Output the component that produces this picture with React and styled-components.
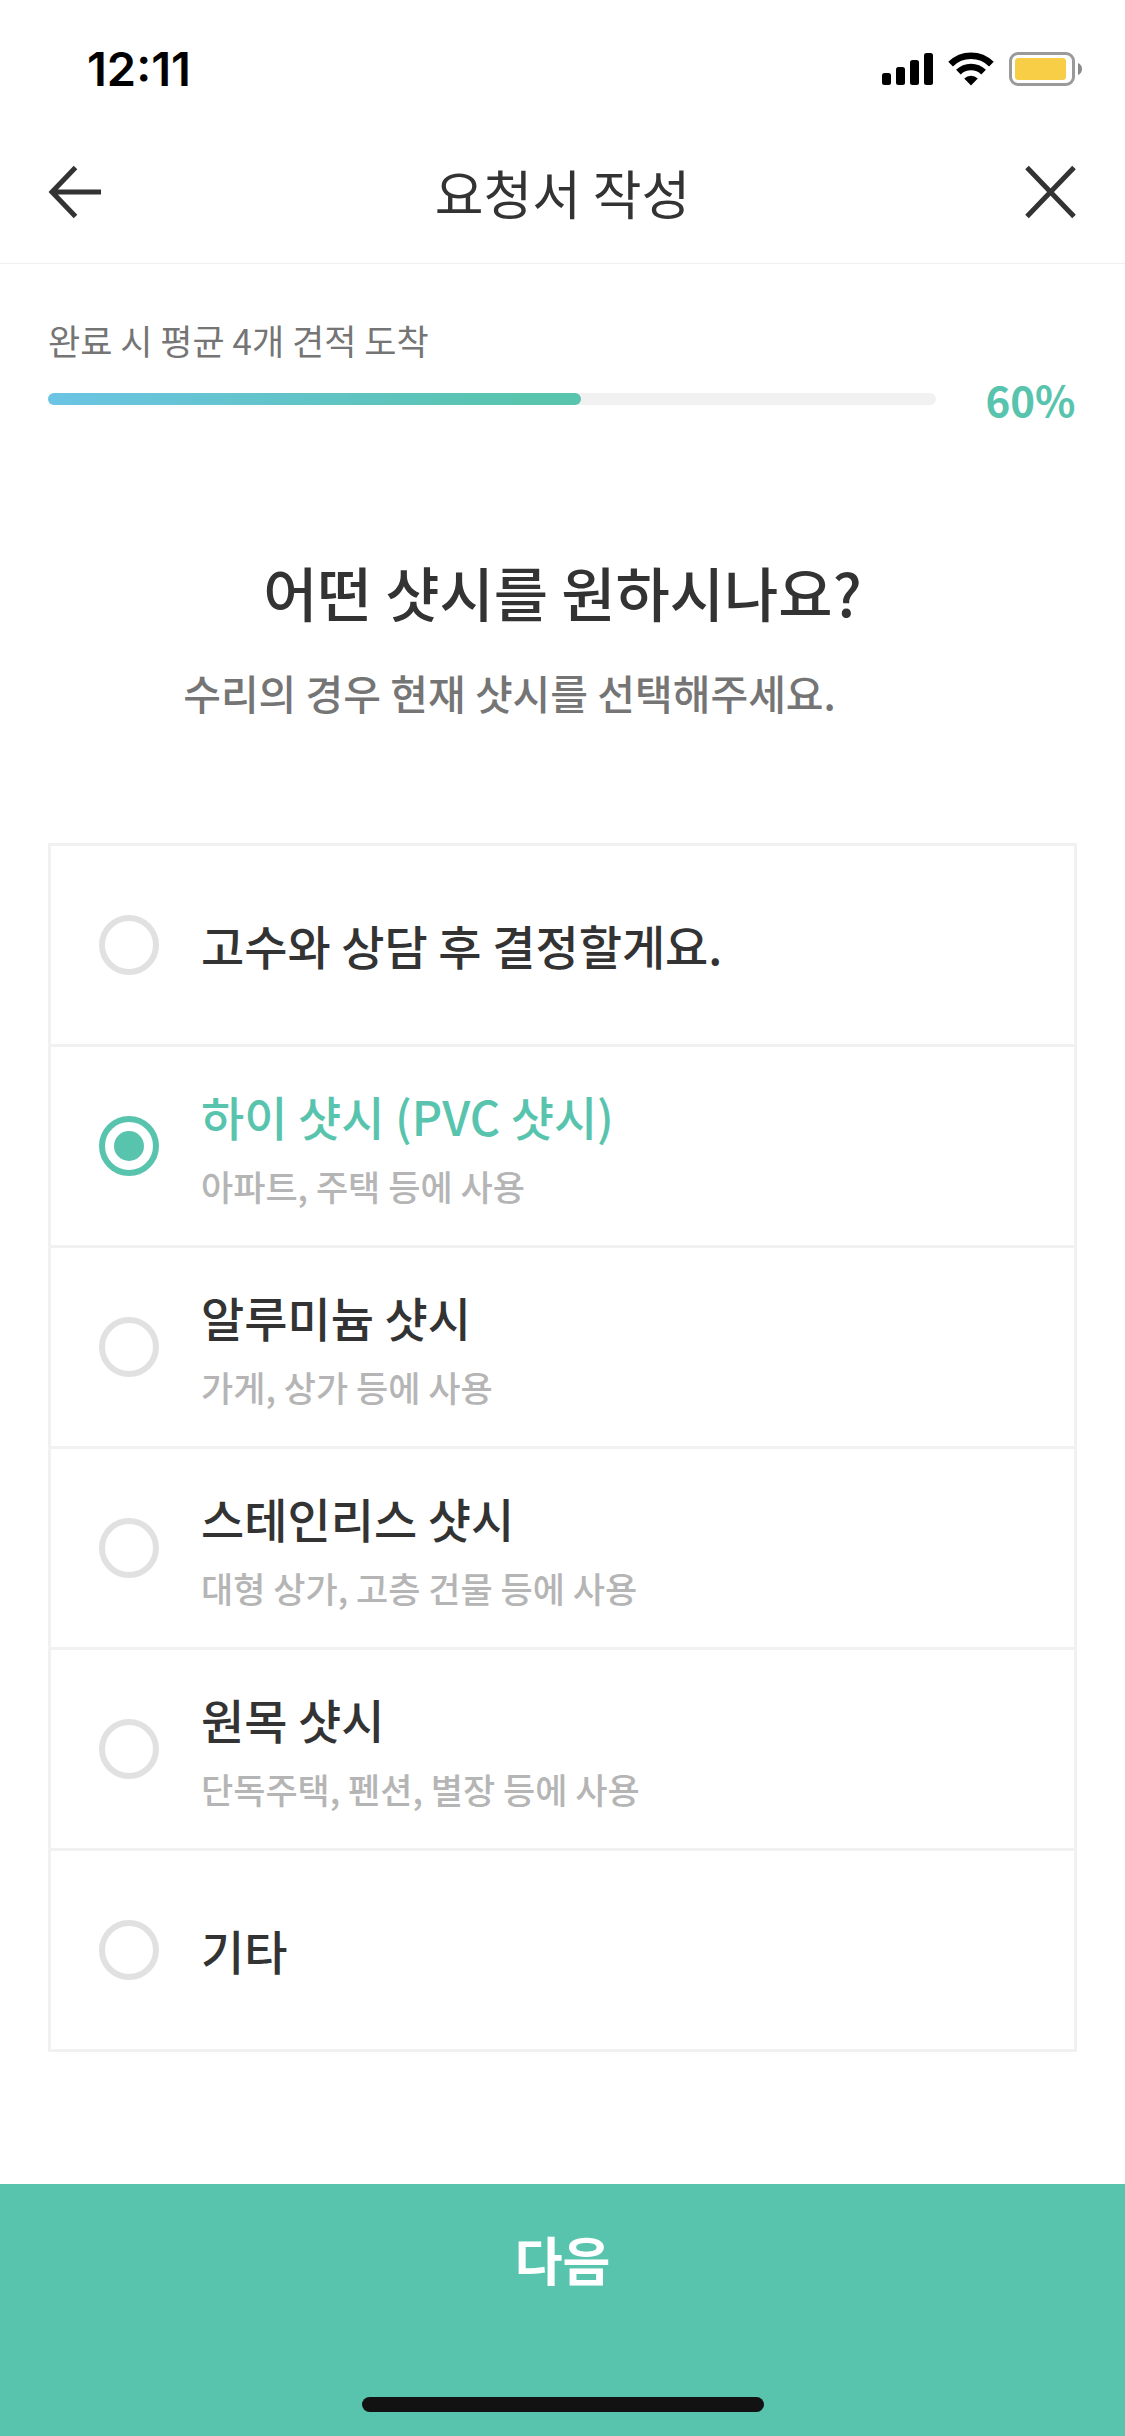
import React, { useState } from "react";
import styled, { createGlobalStyle } from "styled-components";

const options = [
  { id: "consult", title: "고수와 상담 후 결정할게요." },
  { id: "pvc", title: "하이 샷시 (PVC 샷시)", hint: "아파트, 주택 등에 사용" },
  { id: "aluminium", title: "알루미늄 샷시", hint: "가게, 상가 등에 사용" },
  { id: "stainless", title: "스테인리스 샷시", hint: "대형 상가, 고층 건물 등에 사용" },
  { id: "wood", title: "원목 샷시", hint: "단독주택, 펜션, 별장 등에 사용" },
  { id: "etc", title: "기타" },
];

const App = () => {
  const [selected, setSelected] = useState("pvc");

  return (
    <Page>
      <GlobalStyle />
      <StatusBar />
      <Header>
        <IconButton type="button" aria-label="뒤로">
          <BackIcon />
        </IconButton>
        <HeaderTitle>요청서 작성</HeaderTitle>
        <IconButton type="button" aria-label="닫기">
          <CloseIcon />
        </IconButton>
      </Header>
      <Content>
        <Progress percent={60} />
        <Question>어떤 샷시를 원하시나요?</Question>
        <Description>수리의 경우 현재 샷시를 선택해주세요.</Description>
        <OptionList role="radiogroup" aria-label="샷시 종류">
          {options.map(({ id, title, hint }) => (
            <Option key={id} htmlFor={id}>
              <Radio
                id={id}
                name="sash"
                value={id}
                checked={selected === id}
                onChange={() => setSelected(id)}
              />
              <OptionText>
                <OptionTitle $active={selected === id}>{title}</OptionTitle>
                {hint && <OptionHint>{hint}</OptionHint>}
              </OptionText>
            </Option>
          ))}
        </OptionList>
      </Content>
      <Footer>
        <NextButton type="button">다음</NextButton>
        <HomeIndicator />
      </Footer>
    </Page>
  );
};

export default App;

const StatusBar = () => (
  <StatusBarDiv>
    <Time>12:11</Time>
    <StatusIcons>
      <SignalIcon />
      <WifiIcon />
      <BatteryIcon />
    </StatusIcons>
  </StatusBarDiv>
);

const Progress = ({ percent }) => (
  <section>
    <ProgressLabel>완료 시 평균 4개 견적 도착</ProgressLabel>
    <ProgressRow>
      <Track>
        <Fill style={{ width: `${percent}%` }} />
      </Track>
      <Percent>{percent}%</Percent>
    </ProgressRow>
  </section>
);

// --- Icons ---

const SignalIcon = () => (
  <svg width="51" height="34" viewBox="0 0 51 34" aria-hidden="true">
    <rect x="0" y="21" width="9" height="12" rx="2.5" />
    <rect x="14" y="15" width="9" height="18" rx="2.5" />
    <rect x="28" y="8" width="9" height="25" rx="2.5" />
    <rect x="42" y="1" width="9" height="32" rx="2.5" />
  </svg>
);

const WifiIcon = () => (
  <svg width="46" height="34" viewBox="0 0 46 34" aria-hidden="true">
    <g fill="none" stroke="#000" strokeWidth="6.6">
      <path d="M2.6 12.2 A29 29 0 0 1 43.4 12.2" />
      <path d="M10.4 20.2 A18 18 0 0 1 35.6 20.2" />
    </g>
    <path d="M23 33.4 L16.2 26.6 A9.8 9.8 0 0 1 29.8 26.6 Z" />
  </svg>
);

const BatteryIcon = () => (
  <svg width="74" height="34" viewBox="0 0 74 34" aria-hidden="true">
    <rect x="1.5" y="1.5" width="63" height="31" rx="7.5" fill="none" stroke="#9a9a9a" strokeWidth="3" />
    <rect x="6" y="6" width="51" height="22" rx="3.5" fill="#f7ce46" />
    <path d="M69 11 C74.4 13 74.4 21 69 23 Z" fill="#8a8a8a" />
  </svg>
);

const BackIcon = () => (
  <svg width="54" height="54" viewBox="0 0 54 54" fill="none" stroke="#333" strokeWidth="5" aria-hidden="true">
    <path d="M53 27 H4 M27.5 2.5 L4 27 L27.5 51.5" />
  </svg>
);

const CloseIcon = () => (
  <svg width="54" height="54" viewBox="0 0 54 54" fill="none" stroke="#333" strokeWidth="5" aria-hidden="true">
    <path d="M4 2.5 L51 51.5 M51 2.5 L4 51.5" />
  </svg>
);

// --- Styling section ---

const GlobalStyle = createGlobalStyle`
  * {
    box-sizing: border-box;
  }

  body {
    margin: 0;
    background: #fff;
    color: #333;
    font-family: "Noto Sans CJK KR", sans-serif;
  }

  button {
    border: 0;
    background: none;
    color: inherit;
    font-family: inherit;
    cursor: pointer;
  }
`;

const Page = styled.div`
  display: flex;
  flex-direction: column;
  min-height: 100vh;
`;

const StatusBarDiv = styled.div`
  display: flex;
  align-items: center;
  justify-content: space-between;
  height: 120px;
  padding: 18px 42px 0 87px;
`;

const Time = styled.span`
  color: #000;
  font-family: Inter, sans-serif;
  font-size: 47px;
  font-weight: 600;
  line-height: 48px;
`;

const StatusIcons = styled.div`
  display: flex;
  align-items: center;
  gap: 15px;
`;

const Header = styled.header`
  display: flex;
  align-items: center;
  justify-content: space-between;
  height: 144px;
  padding: 0 48px;
  border-bottom: 1px solid #f0f0f0;
`;

const IconButton = styled.button`
  display: flex;
  padding: 0;
`;

const HeaderTitle = styled.h1`
  margin: 0;
  font-size: 53px;
  font-weight: 400;
  line-height: 72px;
`;

const Content = styled.main`
  display: flex;
  flex-direction: column;
  padding: 51px 48px 132px;
`;

const ProgressLabel = styled.p`
  margin: 0;
  color: #757575;
  font-size: 35px;
  line-height: 50px;
`;

const ProgressRow = styled.div`
  display: flex;
  align-items: center;
  gap: 48px;
`;

const Track = styled.div`
  flex: 1;
  height: 12px;
  border-radius: 6px;
  background: #f1f1f1;
`;

const Fill = styled.div`
  height: 100%;
  border-radius: 6px;
  background: linear-gradient(90deg, #6bc4e4, #58c4ad 90%);
`;

const Percent = styled.span`
  width: 93px;
  color: #58c4ad;
  font-size: 42px;
  font-weight: 700;
  line-height: 68px;
  text-align: center;
`;

const Question = styled.h2`
  margin: 117px 0 28px;
  font-size: 59px;
  font-weight: 500;
  line-height: 84px;
  text-align: center;
`;

const Description = styled.p`
  margin: 0;
  padding-right: 106px;
  color: #757575;
  font-size: 41px;
  font-weight: 500;
  line-height: 60px;
  text-align: center;
`;

const OptionList = styled.div`
  margin-top: 121px;
  border: 3px solid #f1f1f1;
`;

const Option = styled.label`
  display: flex;
  align-items: center;
  gap: 42px;
  min-height: 198px;
  padding: 0 48px;
  cursor: pointer;

  & + & {
    min-height: 201px;
    border-top: 3px solid #f1f1f1;
  }
`;

const Radio = styled.input.attrs({ type: "radio" })`
  appearance: none;
  display: grid;
  place-content: center;
  flex: none;
  width: 60px;
  height: 60px;
  margin: 0;
  border: 6px solid #e1e1e1;
  border-radius: 50%;

  &:checked {
    border-color: #58c4ad;
  }

  &:checked::before {
    content: "";
    width: 30px;
    height: 30px;
    border-radius: 50%;
    background: #58c4ad;
  }
`;

const OptionText = styled.span`
  display: flex;
  flex-direction: column;
  gap: 12px;
`;

const OptionTitle = styled.span`
  color: ${({ $active }) => ($active ? "#58c4ad" : "#333")};
  font-size: 47px;
  font-weight: 500;
  line-height: 68px;
`;

const OptionHint = styled.span`
  color: #b5b5b5;
  font-size: 35px;
  font-weight: 500;
  line-height: 48px;
`;

const Footer = styled.footer`
  display: flex;
  flex-direction: column;
  align-items: center;
  margin-top: auto;
  padding-bottom: 24px;
  background: #58c4ad;
`;

const NextButton = styled.button`
  width: 100%;
  padding: 39px 0 102px;
  color: #fff;
  font-size: 52px;
  font-weight: 700;
  line-height: 72px;
`;

const HomeIndicator = styled.div`
  width: 402px;
  max-width: 60%;
  height: 15px;
  border-radius: 8px;
  background: #121212;
`;
